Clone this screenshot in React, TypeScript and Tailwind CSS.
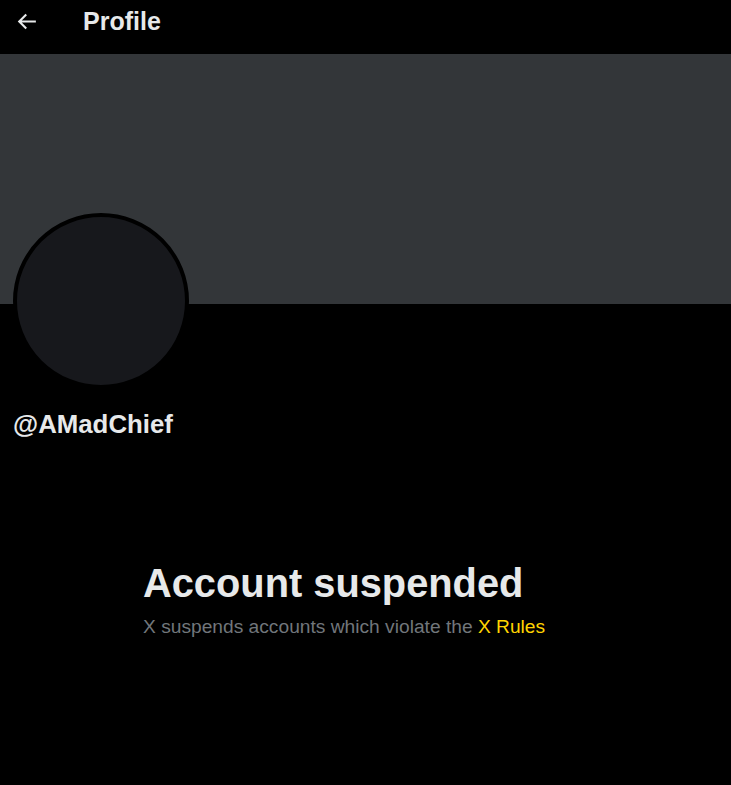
export default function App() {
  return (
    <div className="min-h-[785px] w-full bg-black text-[#e7e9ea]" style={{ fontFamily: '"Liberation Sans", Arial, sans-serif' }}>
      <div className="flex h-[54px] items-center">
        <div className="flex w-[83px] items-center pl-[14px] mt-[-12px]">
          <svg width="25" height="25" viewBox="0 0 24 24" fill="none">
            <path d="M7.414 13l5.043 5.04-1.414 1.42L3.586 12l7.457-7.46 1.414 1.42L7.414 11H21v2H7.414z" fill="#e7e9ea" />
          </svg>
        </div>
        <div className="text-[25px] font-bold leading-none mt-[-12px]">Profile</div>
      </div>
      <div className="h-[250px] bg-[#333639]" />
      <div className="pl-[13px]">
        <div className="mt-[-91px] h-[176px] w-[176px] rounded-full border-[4px] border-black bg-[#17181c]" />
        <div className="mt-[20px] text-[25.8px] font-bold leading-[30px]">@AMadChief</div>
      </div>
      <div className="mt-[121px] pl-[143px]">
        <div className="text-[39.8px] font-bold leading-[46px]">Account suspended</div>
        <div className="mt-[9px] text-[19.2px] leading-[24px] text-[#71767b]">
          X suspends accounts which violate the <span className="text-[#ffd400]">X Rules</span>
        </div>
      </div>
    </div>
  );
}
